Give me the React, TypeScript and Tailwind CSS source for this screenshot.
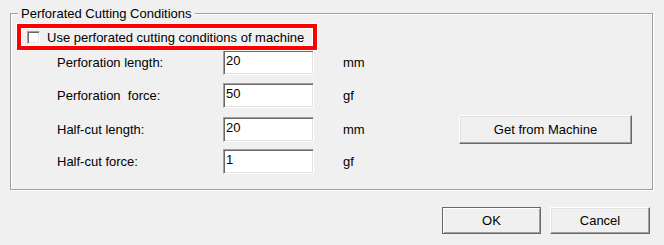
import React from "react";

type Row = {
  label: string;
  value: string;
  unit: string;
  gap: string;
  extra?: boolean;
};

const rows: Row[] = [
  { label: "Perforation length:", value: "20", unit: "mm", gap: "mt-0" },
  { label: "Perforation  force:", value: "50", unit: "gf", gap: "mt-[8px]" },
  { label: "Half-cut length:", value: "20", unit: "mm", gap: "mt-[9px]", extra: true },
  { label: "Half-cut force:", value: "1", unit: "gf", gap: "mt-[7px]" },
];

const sunken =
  "border border-t-[#a0a0a0] border-l-[#a0a0a0] border-b-white border-r-white shadow-[inset_1px_1px_0_#696969,inset_-1px_-1px_0_#e3e3e3]";

const raised =
  "border border-t-white border-l-white border-b-[#696969] border-r-[#696969] shadow-[inset_-1px_-1px_0_#a0a0a0,inset_1px_1px_0_#e3e3e3] bg-[#f0f0f0]";

function Field({ value }: { value: string }) {
  return (
    <div className={`h-[25px] w-[91px] bg-white pl-[2px] pt-[2px] leading-[15px] ${sunken}`}>
      {value}
    </div>
  );
}

export default function App() {
  return (
    <div
      className="h-[245px] w-[664px] bg-[#f0f0f0] pl-[10px] pr-[11px] pt-[13px] text-[13px] leading-[15px] text-black"
      style={{ fontFamily: '"Liberation Sans", Arial, sans-serif' }}
    >
      {/* group box */}
      <div className="relative h-[177px] border border-[#a0a0a0] shadow-[inset_1px_1px_0_#fff,1px_1px_0_#fff]">
        <span className="absolute left-[7px] top-[-8px] bg-[#f0f0f0] px-[3px] leading-[15px]">
          Perforated Cutting Conditions
        </span>

        <div className="ml-[6px] mt-[10px] h-[26px] w-[300px] border-4 border-[#ff0000] outline outline-white">
          <div className="flex h-full items-center border border-white pl-[5px]">
            <div className={`h-[13px] w-[13px] bg-white ${sunken}`} />
            <span className="ml-[7px] whitespace-nowrap">
              Use perforated cutting conditions of machine
            </span>
          </div>
        </div>

        <div className="flex flex-col pl-[46px]">
          {rows.map((row) => (
            <div key={row.label} className={`flex h-[25px] items-center ${row.gap}`}>
              <span className="w-[166px] whitespace-pre">{row.label}</span>
              <Field value={row.value} />
              <span className="ml-[29px] w-[116px]">{row.unit}</span>
              {row.extra && (
                <button type="button" className={`h-[29px] w-[173px] shrink-0 ${raised}`}>
                  Get from Machine
                </button>
              )}
            </div>
          ))}
        </div>
      </div>

      <div className="mt-[17px] flex justify-end gap-[9px] pr-[3px]">
        <button
          type="button"
          className="h-[27px] w-[99px] border border-[#696969] bg-[#f0f0f0] shadow-[inset_1px_1px_0_#fff,inset_-1px_-1px_0_#a0a0a0]"
        >
          OK
        </button>
        <button type="button" className={`h-[27px] w-[100px] ${raised}`}>
          Cancel
        </button>
      </div>
    </div>
  );
}
